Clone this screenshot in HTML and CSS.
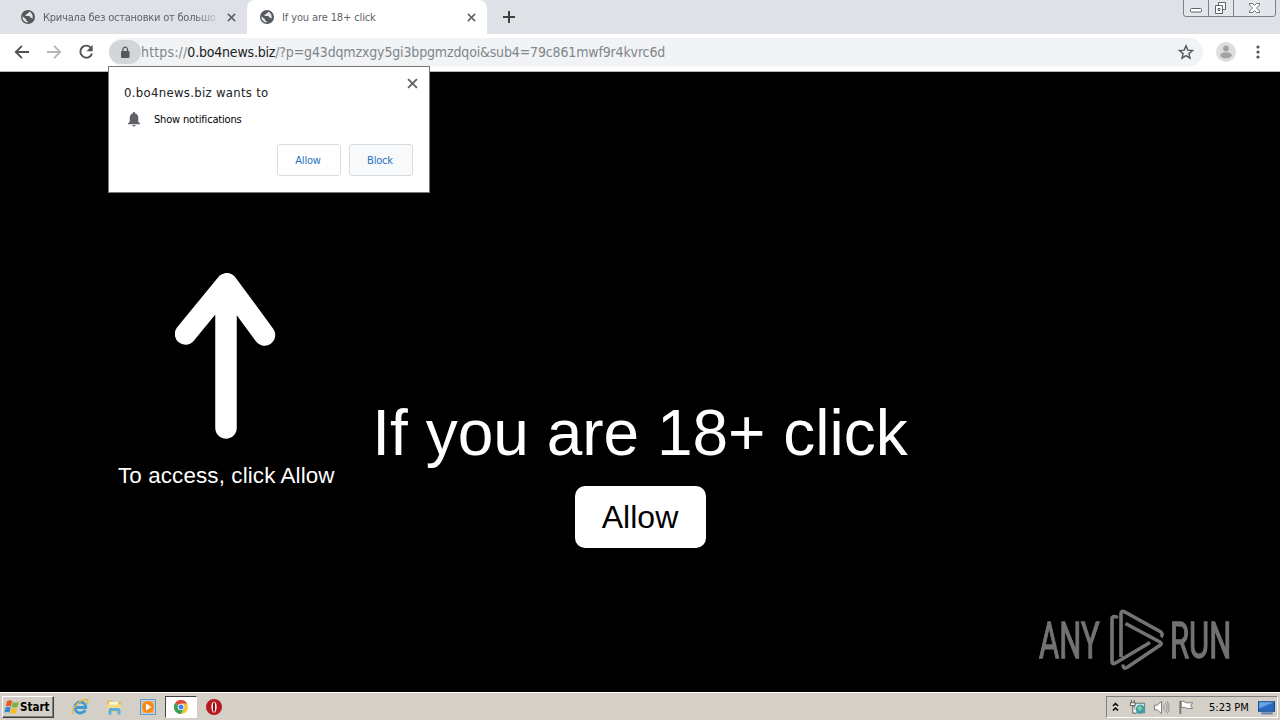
FILE: index.html
```
<!DOCTYPE html>
<html lang="en">
<head>
    <meta charset="UTF-8">
    <title>If you are 18+ click</title>
    <link rel="stylesheet" href="styles.css">
</head>
<body>
    <svg width="0" height="0" class="defs">
        <symbol id="globe" viewBox="0 0 14 14">
            <circle cx="7" cy="7" r="7" fill="#55585c"/>
            <path d="M1.5 6.2L5 9.2v1.2l1.6.5v1.7A5.6 5.6 0 0 1 1.5 6.2zM8.2 1.6c-.2 1.2-.5 1.6-1.8 1.7-.2 1.3-.9 1.2-1.8 1.3v1.3h3.5c.9.2.8 1.5 1.8 1.8.9 0 1.3.4 1.4 1.3A5.6 5.6 0 0 0 8.2 1.6z" fill="#e4e6ea"/>
        </symbol>
        <symbol id="cross" viewBox="0 0 10 10">
            <path d="M1 1l8 8M9 1L1 9" fill="none" stroke="#5f6368" stroke-width="1.7"/>
        </symbol>
    </svg>

    <!-- browser tabs -->
    <div class="tabs">
        <div class="tab">
            <svg class="globe"><use href="#globe"/></svg>
            <span class="tab-title faded">Кричала без остановки от большо</span>
            <svg class="cross"><use href="#cross"/></svg>
        </div>
        <div class="tab active">
            <svg class="globe"><use href="#globe"/></svg>
            <span class="tab-title">If you are 18+ click</span>
            <svg class="cross"><use href="#cross"/></svg>
        </div>
        <svg class="plus" viewBox="0 0 12 12"><path d="M6 0v12M0 6h12" stroke="#3c4043" stroke-width="2"/></svg>
        <svg class="window-buttons" viewBox="0 0 94 17">
            <path d="M.5 0v14q0 2.500 2.500 2.500h87q2.500 0 2.500-2.500V0M25.500 0v16M50.500 0v16" fill="#e3e6eb" stroke="#7d828a"/>
            <rect x="7.500" y="8.500" width="11" height="3.500" rx="1" fill="#fff" stroke="#60656c"/>
            <path d="M35.500 2.500h7v7h-7z" fill="#fff" stroke="#60656c"/>
            <path d="M32.500 5.500h7v8h-7z" fill="#fff" stroke="#60656c"/>
            <path d="M35 8.500h2v2h-2z" fill="none" stroke="#60656c"/>
            <path d="M66.500 3.500h3l2 2 2-2h3v1.500l-3 3 3 3v1.500h-3l-2-2-2 2h-3V11l3-3-3-3z" fill="#fff" stroke="#60656c" stroke-width=".9"/>
        </svg>
    </div>

    <!-- toolbar with address bar -->
    <div class="toolbar">
        <svg class="nav" viewBox="0 0 16 16"><path d="M15 8H2.500M8 1.800L1.800 8 8 14.200" fill="none" stroke="#505357" stroke-width="1.900"/></svg>
        <svg class="nav" viewBox="0 0 16 16"><path d="M1 8h12.500M8 1.800L14.200 8 8 14.200" fill="none" stroke="#b5b7ba" stroke-width="1.900"/></svg>
        <svg class="nav" viewBox="0 0 16 16"><path d="M13.300 4.300A6 6 0 1 0 14 9.600" fill="none" stroke="#505357" stroke-width="1.900"/><path d="M14.700 1v6.200H8.500z" fill="#505357"/></svg>
        <div class="address">
            <span class="lock">
                <svg viewBox="0 0 10 13"><rect x="1" y="5" width="8.500" height="7" rx="1" fill="#55585c"/><path d="M2.900 5.500V3.500a2.300 2.300 0 0 1 4.600 0v2" fill="none" stroke="#55585c" stroke-width="1.300"/></svg>
            </span>
            <span class="url"><span class="scheme">https://</span><b>0.bo4news.biz</b>/?p=g43dqmzxgy5gi3bpgmzdqoi&amp;sub4=79c861mwf9r4kvrc6d</span>
            <svg class="star" viewBox="0 0 16 16"><path d="M8 1.700l1.800 4.400 4.700.4-3.600 3.100 1.100 4.600L8 11.700l-4 2.500 1.100-4.600L1.500 6.500l4.700-.4z" fill="none" stroke="#55585c" stroke-width="1.400"/></svg>
        </div>
        <svg class="avatar" viewBox="0 0 20 20"><circle cx="10" cy="10" r="10" fill="#dcdddf"/><circle cx="10" cy="6.500" r="2.900" fill="#a2a3a5"/><ellipse cx="10" cy="13.300" rx="5.700" ry="3.100" fill="#a2a3a5"/></svg>
        <svg class="dots" viewBox="0 0 4 14"><g fill="#505357"><circle cx="2" cy="2" r="1.600"/><circle cx="2" cy="7" r="1.600"/><circle cx="2" cy="12" r="1.600"/></g></svg>
    </div>

    <!-- notification permission popup -->
    <div class="popup">
        <svg class="popup-close"><use href="#cross"/></svg>
        <div class="popup-title">0.bo4news.biz wants to</div>
        <div class="popup-row">
            <svg viewBox="0 0 12 15"><path d="M6 0c.7 0 1.100.5 1.100 1.300C9.200 1.900 10.300 3.500 10.300 6v3.700L12 11.500v.8H0v-.8l1.700-1.800V6c0-2.500 1.100-4.100 3.200-4.700C4.900.5 5.300 0 6 0zM4.500 13h3a1.500 1.500 0 0 1-3 0z" fill="#5f6368"/></svg>
            <span>Show notifications</span>
        </div>
        <div class="popup-buttons">
            <button>Allow</button>
            <button class="block">Block</button>
        </div>
    </div>

    <!-- page -->
    <main>
        <div class="hint">
            <svg viewBox="0 0 101 166"><path d="M51.500 11L10.500 61M52 11l37.500 51M51 14v141" fill="none" stroke="#fff" stroke-width="21.500" stroke-linecap="round"/></svg>
            <p>To access, click Allow</p>
        </div>
        <div class="center">
            <h1>If you are 18+ click</h1>
            <button class="allow">Allow</button>
        </div>
        <div class="brand">
            <span class="any">ANY</span>
            <svg viewBox="0 0 56 62"><path d="M7.500 9.500V8Q3 6.500 3 10v42q0 4 3.500 2L41 33.500M12 48V5q0-4 3.500-2.200l36 20q3 2.200.5 5.200M16.500 14.500L51 33q2.500 1.500 0 3.200L18 58.500q-4 2-4-3" fill="none" stroke="#737373" stroke-width="3.600"/></svg>
            <span class="run">RUN</span>
        </div>
    </main>

    <!-- windows taskbar -->
    <footer class="taskbar">
        <button class="start">
            <svg viewBox="0 0 16 16"><path d="M3 2q3-1.500 5.300.2L7 7.500q-2.400-1.500-5.200-.3z" fill="#e85b25"/><path d="M9 2.700q3 1.600 6 .2l-1.600 5.200q-3 1.300-5.500-.2z" fill="#79b341"/><path d="M1.600 8.200q2.800-1.200 5.200.3l-1.400 5.200Q3 12.300.2 13.400z" fill="#3e87d0"/><path d="M7.600 9q2.500 1.400 5.500.2l-1.500 5.100q-3 1.200-5.400-.3z" fill="#f5bd20"/></svg>
            Start
        </button>
        <div class="launch">
            <svg viewBox="0 0 18 18"><path d="M14.300 12A5.500 5.500 0 1 1 14.800 8.500v1H5" fill="none" stroke="#3a9bd6" stroke-width="2.800"/><path d="M2 16C-1 13 8 2 15 1.500c2.500 0 2 2.500 1 4.500" fill="none" stroke="#e3b440" stroke-width="1.500"/></svg>
            <svg viewBox="0 0 18 18"><path d="M2 2.500h5l1 1.500h8V14H2z" fill="#e3bd5c"/><path d="M4 4h9v5H4z" fill="#fff8cf"/><path d="M2 6.500h14v7H2z" fill="#f2da8a"/><path d="M3.500 16.500V12q0-2 2-2h8q2 0 2 2v4.500h-3V13h-6v3.500z" fill="#58afe0"/></svg>
            <svg viewBox="0 0 18 18"><path d="M1.500 1.500h15v15h-15z" fill="#b8d5ec" stroke="#5d99cb"/><path d="M3 3h12v12H3z" fill="#f9b469"/><circle cx="9" cy="9" r="6" fill="#f58b1c"/><path d="M7 5.500l5.500 3.500L7 12.500z" fill="#fff"/></svg>
            <span class="running">
                <svg viewBox="0 0 14 14"><circle cx="7" cy="7" r="7" fill="#f1c933"/><path d="M7 7L.9 3.500A7 7 0 0 1 13.100 3.500H7z" fill="#dc4a3d"/><path d="M7 7L.9 3.500A7 7 0 0 0 6.700 14L10 8.700z" fill="#35a257"/><circle cx="7" cy="7" r="3.300" fill="#fff"/><circle cx="7" cy="7" r="2.500" fill="#4384ee"/></svg>
            </span>
            <svg viewBox="0 0 18 18"><circle cx="9" cy="9" r="8" fill="#b91821"/><ellipse cx="9" cy="9" rx="2.600" ry="5.500" fill="#fff"/><ellipse cx="9" cy="9" rx="1.100" ry="5" fill="#8b1017"/></svg>
        </div>
        <div class="tray">
            <svg class="chevrons" viewBox="0 0 7 10"><path d="M1 4l2.500-2.500L6 4M1 8.500L3.500 6 6 8.500" fill="none" stroke="#000" stroke-width="1.500"/></svg>
            <svg viewBox="0 0 18 18"><path d="M5.500 4.500h11v10h-11z" fill="#c9e5e7" stroke="#5e7378"/><path d="M2.500 1v3M5.500 1v3M1.500 4h5v3h-5zM4 7v8h4" fill="#fff" stroke="#555"/><circle cx="12" cy="11" r="4.800" fill="#3f9eaa"/><path d="M9 9l3-2 2 3-3 3z" fill="#88cf9d"/></svg>
            <svg viewBox="0 0 18 18"><path d="M1.500 6.500h3L9 2.500v13l-4.500-4h-3z" fill="#fff" stroke="#777"/><path d="M11 6q2 3 0 6M13 4q4 5 0 10M15 2.500q4 6.500 0 13" fill="none" stroke="#888"/></svg>
            <svg viewBox="0 0 18 18"><path d="M3.500 2v14" stroke="#777" stroke-width="2"/><path d="M4.500 2.500q3-1 5 1.500h7l-2 3 2 3h-6q-2-2-6-1z" fill="#fff" stroke="#777"/></svg>
            <span class="clock">5:23 PM</span>
            <svg viewBox="0 0 16 16"><path d="M.5 2.500h15v9H.5z" fill="#286ac0" stroke="#174b91"/><path d="M1 3h14L1 9z" fill="#68a4e5"/><path d="M3 13.500h11" stroke="#6283aa" stroke-width="2"/></svg>
        </div>
    </footer>
</body>
</html>
```
FILE: styles.css
```
* {
    margin: 0;
    padding: 0;
    box-sizing: border-box;
}

body {
    width: 1280px;
    height: 720px;
    overflow: hidden;
    display: flex;
    flex-direction: column;
    position: relative;
    background: #000;
    font-family: "DejaVu Sans Condensed", "DejaVu Sans", sans-serif;
    font-size: 11px;
}

svg {
    display: block;
    flex: none;
}

.defs {
    position: absolute;
}

.tabs {
    height: 34px;
    flex: none;
    display: flex;
    background: #dee1e6;
    padding-left: 7px;
}

.tab {
    width: 240px;
    height: 34px;
    display: flex;
    align-items: center;
    padding: 0 11px 0 14px;
    color: #5f6368;
}

.tab.active {
    background: #fff;
    border-radius: 8px 8px 0 0;
    padding-left: 13px;
}

.globe {
    width: 14px;
    height: 14px;
}

.tab-title {
    margin-left: 8px;
    white-space: nowrap;
    font-size: 11px;
    letter-spacing: -0.12px;
}

.faded {
    letter-spacing: -0.22px;
    -webkit-mask-image: linear-gradient(to right, #000 88%, rgba(0, 0, 0, 0.2));
    mask-image: linear-gradient(to right, #000 88%, rgba(0, 0, 0, 0.2));
}

.cross {
    width: 9px;
    height: 9px;
    margin-left: auto;
}

.plus {
    width: 12px;
    height: 12px;
    margin: 11px 0 0 16px;
}

.window-buttons {
    width: 94px;
    height: 17px;
    margin-left: auto;
    margin-right: 3px;
}

.toolbar {
    height: 38px;
    flex: none;
    display: flex;
    align-items: center;
    background: #fff;
    border-bottom: 1px solid #b6b6b6;
    padding: 0 0 1px 14px;
}

.nav {
    width: 16px;
    height: 16px;
    margin-right: 16px;
}

.address {
    width: 1094px;
    height: 28px;
    display: flex;
    align-items: center;
    background: #f1f3f4;
    border-radius: 14px;
    margin-left: -1px;
}

.lock {
    width: 32px;
    height: 24px;
    border-radius: 12px;
    background: #d3d5d8;
    display: flex;
    align-items: center;
    justify-content: center;
}

.lock svg {
    width: 10px;
    height: 13px;
}

.url {
    color: #80868b;
    font-size: 14px;
    letter-spacing: -0.15px;
    white-space: nowrap;
}

.scheme {
    letter-spacing: 0.15px;
}

.url b {
    color: #202124;
    font-weight: normal;
    letter-spacing: -0.2px;
}

.star {
    width: 16px;
    height: 16px;
    margin-left: auto;
    margin-right: 9px;
}

.avatar {
    width: 20px;
    height: 20px;
    margin-left: 13px;
}

.dots {
    width: 4px;
    height: 14px;
    margin-left: 20px;
}

.popup {
    position: absolute;
    left: 108px;
    top: 66px;
    width: 322px;
    height: 127px;
    background: #fff;
    border: 1px solid #777;
    padding: 17px 16px 16px 15px;
    display: flex;
    flex-direction: column;
    color: #202124;
}

.popup-close {
    position: absolute;
    right: 11px;
    top: 11px;
    width: 11px;
    height: 11px;
}

.popup-title {
    font-size: 13px;
    line-height: 17px;
    letter-spacing: 0.3px;
}

.popup-row {
    display: flex;
    align-items: center;
    margin-top: 10px;
    height: 16px;
    padding-left: 4px;
    color: #000;
    letter-spacing: -0.17px;
}

.popup-row svg {
    width: 12px;
    height: 15px;
    margin-right: 14px;
}

.popup-buttons {
    display: flex;
    justify-content: flex-end;
    gap: 8px;
    margin-top: auto;
}

.popup-buttons button {
    width: 64px;
    height: 32px;
    background: #fff;
    border: 1px solid #dadce0;
    border-radius: 3px;
    color: #2672c0;
    font: inherit;
    letter-spacing: -0.2px;
    padding-right: 2px;
}

.popup-buttons .block {
    background: #f8f9fa;
}

main {
    height: 620px;
    flex: none;
    display: grid;
    grid-template-columns: 372px 536px 372px;
    background: #000;
    color: #fff;
    font-family: "Liberation Sans", Arial, sans-serif;
}

.hint {
    padding: 201px 0 0 118px;
}

.hint svg {
    width: 101px;
    height: 166px;
    margin-left: 57px;
}

.hint p {
    font-size: 22.4px;
    line-height: 26px;
    margin-top: 24px;
    letter-spacing: 0.12px;
    white-space: nowrap;
}

.center {
    padding-top: 324px;
    display: flex;
    flex-direction: column;
    align-items: center;
}

h1 {
    font-size: 64px;
    line-height: 74px;
    font-weight: normal;
    white-space: nowrap;
}

.allow {
    width: 131px;
    height: 62px;
    margin-top: 16px;
    border: none;
    border-radius: 10px;
    background: #fff;
    color: #000;
    font: 32px "Liberation Sans", Arial, sans-serif;
}

.brand {
    align-self: end;
    display: flex;
    align-items: center;
    padding: 0 0 20px 131px;
    color: #737373;
    font-family: Roboto, sans-serif;
    font-size: 50px;
    line-height: 62px;
    -webkit-text-stroke: 1.3px #737373;
}

.brand svg {
    width: 56px;
    height: 62px;
    margin: 0 5px 0 7px;
}

.any,
.run {
    display: block;
    width: 63px;
    padding-top: 2px;
    transform: scaleX(.62);
    transform-origin: left;
}

.taskbar {
    height: 28px;
    flex: none;
    display: flex;
    align-items: center;
    background: #d4d0c8;
    border-top: 1px solid #fff;
    padding: 1px 2px 0 2px;
}

.start {
    width: 52px;
    height: 22px;
    display: flex;
    align-items: center;
    gap: 0;
    background: #d4d0c8;
    border: 1px solid;
    border-color: #fff #404040 #404040 #fff;
    box-shadow: inset -1px -1px #808080;
    font: bold 11.5px "DejaVu Sans Condensed", sans-serif;
    padding-left: 1px;
}

.start svg {
    width: 16px;
    height: 16px;
}

.launch {
    display: flex;
    align-items: center;
    gap: 16px;
    margin-left: 17px;
}

.launch svg {
    width: 18px;
    height: 18px;
}

.running {
    width: 32px;
    height: 22px;
    margin: 0 -8px;
    display: flex;
    align-items: center;
    justify-content: center;
    background: #fff;
    border: 1px solid;
    border-color: #404040 #fff #fff #404040;
}

.launch .running svg {
    width: 14px;
    height: 14px;
}

.tray {
    width: 172px;
    height: 22px;
    margin-left: auto;
    display: flex;
    align-items: center;
    border: 1px solid;
    border-color: #808080 #fff #fff #808080;
    padding-left: 5px;
}

.tray svg {
    width: 17px;
    height: 17px;
    margin-right: 7px;
}

.tray .chevrons {
    width: 7px;
    height: 10px;
    margin-right: 10px;
}

.clock {
    width: 43px;
    margin: 0 9px 0 8px;
    white-space: nowrap;
}
```
